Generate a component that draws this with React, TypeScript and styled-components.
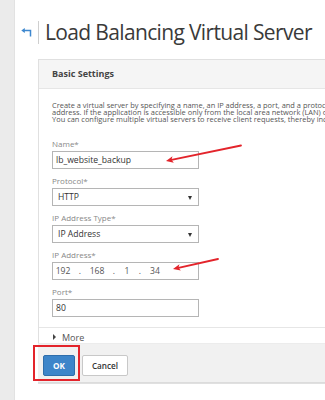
import React from "react";
import styled, { createGlobalStyle } from "styled-components";

const Global = createGlobalStyle`
  html, body { margin: 0; padding: 0; background: #fff; }
  body { font-family: "Open Sans", "Noto Sans", sans-serif; overflow: hidden; }
  * { box-sizing: border-box; }
`;

const Page = styled.div`
  position: relative;
  display: flex;
  width: 325px;
  height: 400px;
  overflow: hidden;
  background: #fff;
`;

const Sidebar = styled.div`
  flex: 0 0 15px;
  background: #ebebeb;
  box-shadow: inset -1px 0 0 #e2e2e2;
`;

const Main = styled.div`
  flex: 1;
  min-width: 0;
  padding-top: 21px;
  overflow: hidden;
`;

const TitleRow = styled.div`
  display: flex;
  align-items: center;
  height: 23px;
  padding-left: 6px;
`;

const Back = styled.div`
  width: 11px;
  height: 10px;
  margin-right: 6px;
  display: flex;
  align-items: center;
`;

const Divider = styled.div`
  width: 1px;
  height: 23px;
  background: #cfcfcf;
`;

const Title = styled.h1`
  margin: 0 0 0 6px;
  font-size: 21px;
  letter-spacing: -0.65px;
  font-weight: 400;
  color: #3a3a3a;
  white-space: nowrap;
  line-height: 23px;
`;

const Panel = styled.div`
  margin: 15px 0 0 23px;
  width: 320px;
  border: 1px solid #e0e0e0;
  border-right: none;
  background: #fff;
`;

const PanelHeader = styled.div`
  height: 29px;
  display: flex;
  align-items: center;
  padding: 0 0 2px 13px;
  background: #f5f5f5;
  border-bottom: 1px solid #e6e6e6;
  font-size: 9px;
  font-weight: 700;
  color: #444;
`;

const PanelBody = styled.div`
  padding: 13px 0 0 13px;
`;

const Description = styled.p`
  margin: 0 0 15px;
  font-size: 7.45px;
  line-height: 7px;
  color: #555;
  white-space: nowrap;
`;

const Field = styled.div`
  display: flex;
  flex-direction: column;
  margin-bottom: 6px;
`;

const Label = styled.label`
  height: 11px;
  line-height: 11px;
  margin-bottom: 2px;
  font-size: 8px;
  color: #888;
`;

const TextBox = styled.div<{ $pad?: number }>`
  position: relative;
  display: flex;
  align-items: center;
  width: 147px;
  height: 18px;
  padding-left: ${(p) => p.$pad ?? 3}px;
  border: 1px solid #b5b5b5;
  background: #fff;
  font-size: 8.6px;
  color: #333;
`;

const Caret = styled.span`
  position: absolute;
  right: 6px;
  top: 7px;
  width: 0;
  height: 0;
  border-left: 2.5px solid transparent;
  border-right: 2.5px solid transparent;
  border-top: 4px solid #333;
`;

const IpSeg = styled.span<{ $w: number }>`
  width: ${(p) => p.$w}px;
  text-align: center;
  color: #555;
`;

const Separator = styled.div`
  height: 1px;
  margin-top: 10px;
  background: #e6e6e6;
  margin-left: -13px;
`;

const MoreRow = styled.div`
  display: flex;
  align-items: center;
  height: 15px;
  padding-top: 3px;
  font-size: 9px;
  color: #555;
`;

const MoreArrow = styled.span`
  width: 0;
  height: 0;
  margin: 0 6px 0 1px;
  border-top: 3px solid transparent;
  border-bottom: 3px solid transparent;
  border-left: 3.5px solid #444;
`;

const Footer = styled.div`
  display: flex;
  gap: 7px;
  height: 40px;
  padding: 11px 0 0 5px;
  background: #f1f1f1;
  border-top: 1px solid #ececec;
  border-bottom: 1px solid #dcdcdc;
  margin-left: -1px;
`;

const Button = styled.button<{ $primary?: boolean }>`
  height: 21px;
  padding: 0;
  width: ${(p) => (p.$primary ? 32 : 46)}px;
  border-radius: 2px;
  border: 1px solid ${(p) => (p.$primary ? "#2f6eab" : "#c8c8c8")};
  background: ${(p) => (p.$primary ? "#3d85c9" : "#fff")};
  color: ${(p) => (p.$primary ? "#fff" : "#333")};
  font-family: "Open Sans", "Noto Sans", sans-serif;
  font-size: 8.2px;
  font-weight: ${(p) => (p.$primary ? 700 : 600)};
`;

const Highlight = styled.div`
  position: absolute;
  left: 33px;
  top: 345px;
  width: 47px;
  height: 36px;
  border: 2px solid #e3242b;
  pointer-events: none;
`;

const Annotations = styled.svg`
  position: absolute;
  left: 0;
  top: 0;
  pointer-events: none;
`;

function Arrow({ x1, y1, x2, y2 }: { x1: number; y1: number; x2: number; y2: number }) {
  const ang = Math.atan2(y2 - y1, x2 - x1);
  const len = 8;
  const spread = 0.42;
  const ax = x2 - len * Math.cos(ang - spread);
  const ay = y2 - len * Math.sin(ang - spread);
  const bx = x2 - len * Math.cos(ang + spread);
  const by = y2 - len * Math.sin(ang + spread);
  const mx = x2 - len * 0.7 * Math.cos(ang);
  const my = y2 - len * 0.7 * Math.sin(ang);
  return (
    <g>
      <line x1={x1} y1={y1} x2={mx} y2={my} stroke="#e3242b" strokeWidth={1.8} strokeLinecap="round" />
      <polygon points={`${x2},${y2} ${ax},${ay} ${mx},${my} ${bx},${by}`} fill="#e3242b" />
    </g>
  );
}

export default function App() {
  return (
    <>
      <Global />
      <Page>
        <Sidebar />
        <Main>
          <TitleRow>
            <Back>
              <svg width="11" height="9" viewBox="0 0 11 9">
                <path d="M9.5 8.5 V2.5 H2.5" fill="none" stroke="#3f88cf" strokeWidth="1.5" />
                <path d="M0.3 2.5 L3.8 0 L3.8 5 Z" fill="#3f88cf" />
              </svg>
            </Back>
            <Divider />
            <Title>Load Balancing Virtual Server</Title>
          </TitleRow>
          <Panel>
            <PanelHeader>Basic Settings</PanelHeader>
            <PanelBody>
              <Description>
                Create a virtual server by specifying a name, an IP address, a port, and a protocol type. If an application is accessible from the Internet,
                <br />
                address. If the application is accessible only from the local area network (LAN) or wide area network (WAN), the VIP is usually a private
                <br />
                You can configure multiple virtual servers to receive client requests, thereby increasing the availability of resources to process client requests.
              </Description>
              <Field>
                <Label>Name*</Label>
                <TextBox>lb_website_backup</TextBox>
              </Field>
              <Field>
                <Label>Protocol*</Label>
                <TextBox $pad={5}>
                  HTTP
                  <Caret />
                </TextBox>
              </Field>
              <Field>
                <Label>IP Address Type*</Label>
                <TextBox $pad={5}>
                  IP Address
                  <Caret />
                </TextBox>
              </Field>
              <Field>
                <Label>IP Address*</Label>
                <TextBox $pad={2}>
                  <IpSeg $w={16}>192</IpSeg>
                  <IpSeg $w={18}>.</IpSeg>
                  <IpSeg $w={16}>168</IpSeg>
                  <IpSeg $w={18}>.</IpSeg>
                  <IpSeg $w={8}>1</IpSeg>
                  <IpSeg $w={18}>.</IpSeg>
                  <IpSeg $w={12}>34</IpSeg>
                </TextBox>
              </Field>
              <Field>
                <Label>Port*</Label>
                <TextBox>80</TextBox>
              </Field>
              <Separator />
              <MoreRow>
                <MoreArrow />
                More
              </MoreRow>
            </PanelBody>
            <Footer>
              <Button $primary>OK</Button>
              <Button>Cancel</Button>
            </Footer>
          </Panel>
        </Main>
        <Highlight />
        <Annotations width="325" height="400" viewBox="0 0 325 400">
          <Arrow x1={241} y1={145.5} x2={166} y2={161} />
          <Arrow x1={218} y1={259} x2={173} y2={269} />
        </Annotations>
      </Page>
    </>
  );
}
